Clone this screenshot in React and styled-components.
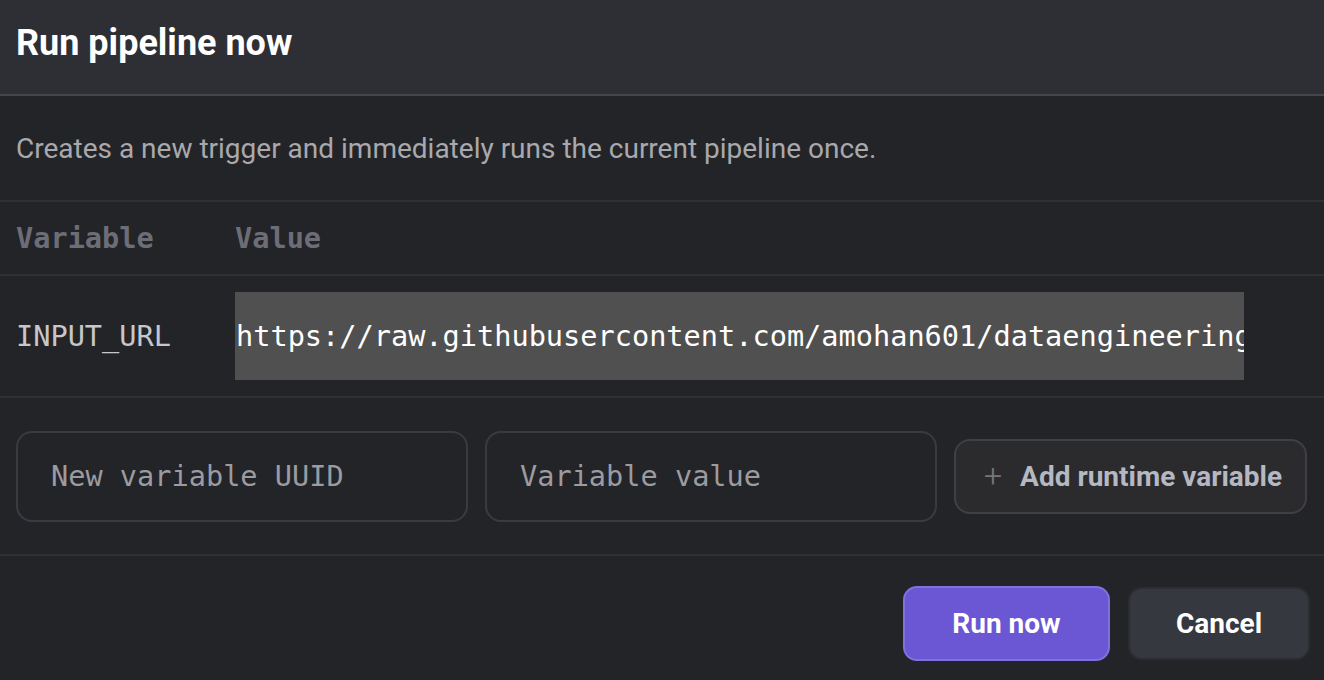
import styled, { createGlobalStyle } from "styled-components";

const GlobalStyle = createGlobalStyle`
    html, body {
        margin: 0;
        padding: 0;
        background: #232428;
    }
    * {
        box-sizing: border-box;
    }
`;

const MONO = `"DejaVu Sans Mono", "Liberation Mono", monospace`;
const SANS = `Roboto, "Noto Sans", sans-serif`;

const App = () => {
    return (
        <>
            <GlobalStyle />
            <Dialog>
                <Header>
                    <Title>Run pipeline now</Title>
                </Header>
                <Description>
                    Creates a new trigger and immediately runs the current pipeline once.
                </Description>
                <Table>
                    <HeadRow>
                        <HeadCell>Variable</HeadCell>
                        <HeadCell>Value</HeadCell>
                    </HeadRow>
                    <BodyRow>
                        <VarName>INPUT_URL</VarName>
                        <ValueBox>
                            https://raw.githubusercontent.com/amohan601/dataengineering/main/data.csv
                        </ValueBox>
                    </BodyRow>
                </Table>
                <AddRow>
                    <Field placeholder="New variable UUID" />
                    <Field placeholder="Variable value" />
                    <AddButton>
                        <Plus>+</Plus>
                        Add runtime variable
                    </AddButton>
                </AddRow>
                <Footer>
                    <Button primary>Run now</Button>
                    <Button>Cancel</Button>
                </Footer>
            </Dialog>
        </>
    );
};

const Dialog = styled.div`
    width: 1324px;
    min-height: 680px;
    background: #232428;
    font-family: ${SANS};
    display: flex;
    flex-direction: column;
`;

const Header = styled.div`
    height: 96px;
    padding: 0 16px;
    display: flex;
    align-items: center;
    background: #2e2f34;
    border-bottom: 2px solid #45464c;
`;

const Title = styled.h1`
    margin: 0;
    margin-top: -8px;
    font-size: 36px;
    font-weight: 700;
    color: #ffffff;
`;

const Description = styled.p`
    margin: 0;
    height: 106px;
    padding: 0 16px;
    display: flex;
    align-items: center;
    font-size: 28px;
    color: #a9a9ad;
    border-bottom: 2px solid #2f3035;
`;

const Table = styled.div`
    display: flex;
    flex-direction: column;
`;

const HeadRow = styled.div`
    height: 74px;
    display: grid;
    grid-template-columns: 219px 1fr;
    align-items: center;
    padding: 0 16px;
    border-bottom: 2px solid #2f3035;
`;

const HeadCell = styled.div`
    font-family: ${MONO};
    font-size: 28.6px;
    font-weight: 700;
    color: #6c6d76;
`;

const BodyRow = styled.div`
    height: 122px;
    display: grid;
    grid-template-columns: 219px 1009px;
    align-items: center;
    padding: 0 16px;
    border-bottom: 2px solid #2f3035;
`;

const VarName = styled.div`
    font-family: ${MONO};
    font-size: 28.6px;
    color: #c7c7cb;
`;

const ValueBox = styled.div`
    height: 88px;
    display: flex;
    align-items: center;
    padding-left: 1px;
    overflow: hidden;
    white-space: nowrap;
    background: #505050;
    font-family: ${MONO};
    font-size: 28.6px;
    color: #ffffff;
`;

const AddRow = styled.div`
    height: 158px;
    display: flex;
    align-items: center;
    gap: 17px;
    padding: 0 16px;
    border-bottom: 2px solid #2f3035;
`;

const Field = styled.input`
    width: 452px;
    height: 91px;
    padding: 0 33px;
    background: transparent;
    border: 2px solid #3a3b40;
    border-radius: 16px;
    font-family: ${MONO};
    font-size: 28.6px;
    color: #e0e0e0;
    outline: none;
    &::placeholder {
        color: #9b9ba0;
    }
`;

const AddButton = styled.button`
    height: 75px;
    width: 353px;
    display: flex;
    align-items: center;
    gap: 18px;
    padding: 0 20px 0 28px;
    background: #2b2b2d;
    border: 2px solid #404044;
    border-radius: 16px;
    font-family: ${SANS};
    font-size: 28px;
    font-weight: 700;
    color: #b5b8c2;
    white-space: nowrap;
`;

const Plus = styled.span`
    font-size: 32px;
    font-weight: 300;
    color: #77777b;
`;

const Footer = styled.div`
    flex: 1;
    display: flex;
    justify-content: flex-end;
    align-items: flex-start;
    gap: 18px;
    padding: 30px 14px 0;
`;

const Button = styled.button`
    height: ${(p) => (p.primary ? "75px" : "73px")};
    margin-top: ${(p) => (p.primary ? "0" : "1px")};
    min-width: ${(p) => (p.primary ? "207px" : "182px")};
    padding: 0 40px;
    background: ${(p) => (p.primary ? "#6b56d3" : "#36383f")};
    border: 2px solid ${(p) => (p.primary ? "#8170dd" : "#2c2d32")};
    border-radius: 14px;
    font-family: ${SANS};
    font-size: 28px;
    font-weight: 700;
    color: #ffffff;
`;

export default App;
